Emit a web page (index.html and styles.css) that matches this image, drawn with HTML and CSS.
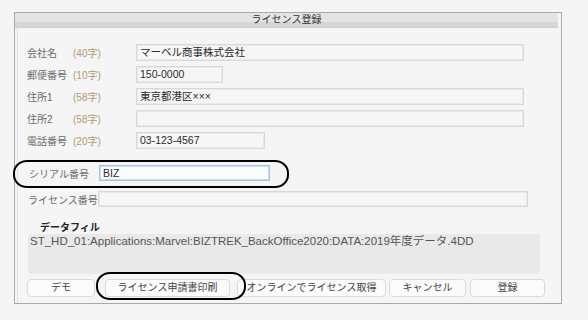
FILE: index.html
```html
<!DOCTYPE html>
<html lang="ja">
<head>
<meta charset="utf-8">
<title>ライセンス登録</title>
<link rel="stylesheet" href="styles.css">
</head>
<body>
<div class="window">
  <div class="titlebar">ライセンス登録</div>
  <div class="content">
    <div class="fields">
      <div class="row">
        <span class="label">会社名</span><span class="count">(40字)</span>
        <div class="field w-long">マーベル商事株式会社</div>
      </div>
      <div class="row">
        <span class="label">郵便番号</span><span class="count">(10字)</span>
        <div class="field w-zip">150-0000</div>
      </div>
      <div class="row">
        <span class="label">住所1</span><span class="count">(58字)</span>
        <div class="field w-long">東京都港区×××</div>
      </div>
      <div class="row">
        <span class="label">住所2</span><span class="count">(58字)</span>
        <div class="field w-long"></div>
      </div>
      <div class="row">
        <span class="label">電話番号</span><span class="count">(20字)</span>
        <div class="field w-tel">03-123-4567</div>
      </div>
    </div>

    <div class="serial">
      <div class="row2">
        <span class="label2">シリアル番号</span>
        <div class="field focus w-serial">BIZ</div>
      </div>
      <div class="row2 license">
        <span class="label2">ライセンス番号</span>
        <div class="field w-license"></div>
      </div>
      <div class="circle circle-serial"></div>
    </div>

    <div class="datafile">
      <div class="df-title">データフィル</div>
      <div class="df-box">ST_HD_01:Applications:Marvel:BIZTREK_BackOffice2020:DATA:2019年度データ.4DD</div>
    </div>

    <div class="buttons">
      <button class="btn b1">デモ</button>
      <button class="btn b2">ライセンス申請書印刷</button>
      <button class="btn b3">オンラインでライセンス取得</button>
      <button class="btn b4">キャンセル</button>
      <button class="btn b5">登録</button>
      <div class="circle circle-print"></div>
    </div>
  </div>
</div>
</body>
</html>
```

FILE: styles.css
```css
html, body {
  margin: 0;
  padding: 0;
  background: #f5f5f5;
}
body {
  font-family: "Liberation Sans", "Noto Sans CJK JP", sans-serif;
  font-size: 10.5px;
  color: #333;
}
.window {
  margin: 12px 0 0 14px;
  width: 546px;
  height: 290px;
  border: 1px solid #a9a9a9;
  background: #f5f5f5;
  box-shadow: inset 2px 0 0 #f5f5f5, inset 3px 0 0 #dde3ea;
  position: relative;
}
.titlebar {
  height: 15px;
  line-height: 13px;
  text-align: center;
  font-size: 10px;
  color: #333;
  background: linear-gradient(#e4e4e4 0, #e4e4e4 9px, #d6d6d6 9px, #d6d6d6 14px, #cfcfcf 14px);
  margin-right: 3px;
}
.content {
  padding: 16px 0 0 12px;
}
.fields {
  display: flex;
  flex-direction: column;
  gap: 5px;
}
.row {
  display: flex;
  align-items: center;
  height: 17px;
}
.label {
  width: 46px;
  color: #6a6a6a;
  font-size: 10px;
  white-space: nowrap;
}
.count {
  width: 63px;
  color: #b39a6c;
  font-size: 10px;
  white-space: nowrap;
}
.field {
  box-sizing: border-box;
  height: 17px;
  border: 1px solid #d8d8d8;
  box-shadow: inset 0 0 0 1px #e9e9e9;
  background: #f6f6f6;
  padding: 0 3px;
  line-height: 15px;
  font-size: 10.5px;
  color: #2a2a2a;
  white-space: nowrap;
}
.w-long { width: 388px; }
.w-zip { width: 87px; }
.w-tel { width: 129px; }

.serial {
  position: relative;
  margin-top: 16px;
}
.row2 {
  display: flex;
  align-items: center;
  height: 16px;
}
.row2 .field { height: 16px; line-height: 14px; }
.license { margin-top: 10px; }
.label2 {
  box-sizing: border-box;
  width: 72px;
  padding-left: 2px;
  color: #6a6a6a;
  font-size: 10px;
  white-space: nowrap;
}
.license .label2 { width: 71px; padding-left: 1px; }
.w-serial { width: 171px; }
.w-license { width: 430px; }
.field.focus {
  border: 1px solid #9fc2ec;
  box-shadow: inset 0 0 0 1px #c9ddf5;
  background: #fbfcfe;
}

.circle {
  position: absolute;
  border: 2px solid #000;
  border-radius: 14px / 13px;
  box-sizing: border-box;
  pointer-events: none;
}
.circle-serial {
  left: -14px;
  top: -5px;
  width: 276px;
  height: 28px;
}

.datafile {
  margin-top: 15px;
  margin-left: 1px;
}
.df-title {
  padding-left: 12px;
  font-weight: bold;
  font-size: 10px;
  color: #222;
  height: 12px;
  line-height: 12px;
}
.df-box {
  width: 512px;
  height: 40px;
  box-sizing: border-box;
  background: #e9e9e9;
  border-radius: 4px;
  padding: 0 2px;
  font-size: 11.5px;
  line-height: 15px;
  color: #555;
  white-space: nowrap;
}

.buttons {
  position: relative;
  display: flex;
  margin-top: 5px;
  height: 18px;
}
.btn {
  box-sizing: border-box;
  height: 18px;
  border: 1px solid #dadada;
  border-radius: 4px;
  background: #fbfbfb;
  font-family: "Liberation Sans", "Noto Sans CJK JP", sans-serif;
  font-size: 10px;
  color: #444;
  padding: 0;
  line-height: 16px;
}
.b1 { width: 68px; }
.b2 { width: 125px; margin-left: 10px; }
.b3 { width: 149px; margin-left: 7px; }
.b4 { width: 77px; margin-left: 3px; }
.b5 { width: 75px; margin-left: 4px; }
.circle-print {
  left: 69px;
  top: -7px;
  width: 150px;
  height: 28px;
}
```
